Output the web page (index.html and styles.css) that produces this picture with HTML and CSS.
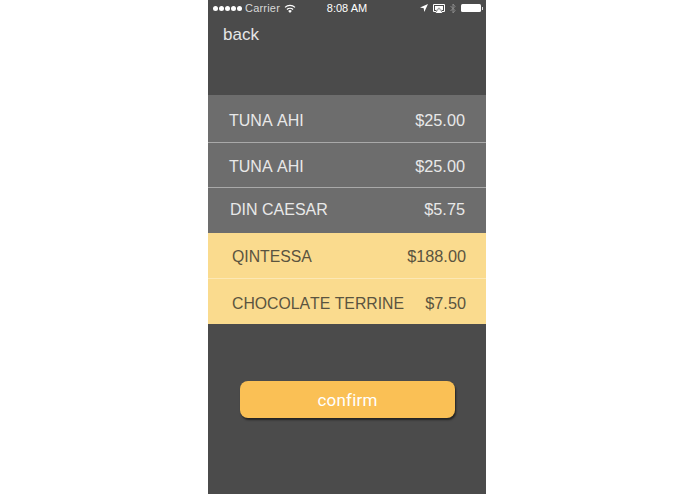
FILE: index.html
```html
<!DOCTYPE html>
<html lang="en">
<head>
<meta charset="utf-8">
<title>Order</title>
<link rel="stylesheet" href="styles.css">
</head>
<body>
<main class="phone">
  <div class="status">
    <div class="status-left">
      <span class="dots"><i></i><i></i><i></i><i></i><i></i></span>
      <span class="carrier">Carrier</span>
      <svg class="wifi" width="12" height="9" viewBox="0 0 12 9"><path d="M6 9 4.2 6.9a2.6 2.6 0 0 1 3.6 0Z" fill="#fff"/><path d="M2.9 5.5a4.5 4.5 0 0 1 6.2 0M1 3.4a7.3 7.3 0 0 1 10 0" fill="none" stroke="#fff" stroke-width="1.2"/></svg>
    </div>
    <div class="time">8:08 AM</div>
    <div class="status-right">
      <svg width="8" height="8" viewBox="0 0 8 8"><path d="M8 0 0 3.6l3.700.6.6 3.800Z" fill="#fff"/></svg>
      <svg width="12" height="9" viewBox="0 0 12 9"><path d="M.5.500h11v7H9L6 4.500 3 7.500H.5Z" fill="none" stroke="#fff"/><path d="M2 2h8v4H8.500L6 3.500 3.500 6H2Z" fill="#fff"/><path d="M6 5l3.500 4h-7Z" fill="#fff"/></svg>
      <svg width="6" height="11" viewBox="0 0 6 11"><path d="M.5 3 5 7.500 3 10V1l2 2.500L.5 8" fill="none" stroke="#8a8a8a"/></svg>
      <span class="battery"><b></b></span>
    </div>
  </div>
  <div class="back">back</div>
  <section class="list">
    <div class="row grey first"><span>TUNA AHI</span><span class="price">$25.00</span></div>
    <div class="row grey second"><span>TUNA AHI</span><span class="price">$25.00</span></div>
    <div class="row grey third"><span>DIN CAESAR</span><span class="price">$5.75</span></div>
    <div class="row yellow fourth"><span>QINTESSA</span><span class="price">$188.00</span></div>
    <div class="row yellow last"><span>CHOCOLATE TERRINE</span><span class="price">$7.50</span></div>
  </section>
  <button class="confirm" type="button">confirm</button>
</main>
</body>
</html>
```
FILE: styles.css
```css
* { box-sizing: border-box; }
html, body { margin: 0; height: 100%; background: #fff; }
body { display: flex; justify-content: center; overflow: hidden; padding-right: 1px; }
.phone {
  width: 278px;
  height: 494px;
  background: #4b4b4b;
  display: flex;
  flex-direction: column;
  font-family: "Liberation Sans", Arial, sans-serif;
  color: #fff;
}
.status {
  height: 16px;
  padding: 0 5px;
  display: flex;
  align-items: center;
  justify-content: space-between;
  font-size: 11px;
  position: relative;
}
.status-left, .status-right { display: flex; align-items: center; }
.status-left { gap: 3px; color: #d8d8d8; }
.carrier { letter-spacing: .2px; }
.wifi { margin-left: 1px; }
.status-right { gap: 5px; }
.dots { display: flex; gap: 1px; }
.dots i { width: 5px; height: 5px; border-radius: 50%; background: #fff; }
.time { position: absolute; left: 0; right: 0; text-align: center; pointer-events: none; }
.battery {
  width: 20px;
  height: 8px;
  background: #fff;
  border-radius: 1.500px;
  position: relative;
}
.battery b {
  position: absolute;
  right: -2px;
  top: 2.500px;
  width: 1.500px;
  height: 3px;
  background: #ddd;
}
.back {
  font-size: 17px;
  line-height: 20px;
  padding: 9px 0 0 15px;
  height: 79px;
  color: #e6e6e6;
}
.list { display: flex; flex-direction: column; }
.row {
  display: flex;
  justify-content: space-between;
  align-items: baseline;
  font-size: 16px;
  line-height: 20px;
  font-kerning: none;
  padding: 0 21px;
}
.price { font-size: 16.300px; }
.grey { background: #6d6d6d; color: #e8e8e8; border-bottom: 1px solid #a9a9a9; }
.first { height: 48px; padding-top: 15px; }
.second { height: 45px; padding-top: 13px; }
.third { height: 45px; border-bottom: 0; padding-left: 22px; padding-top: 11px; }
.yellow {
  background: #fadb8e;
  color: #5a5440;
  font-size: 15.800px;
  height: 46px;
  padding-left: 24px;
  padding-right: 20px;
  border-bottom: 1px solid #fce8b4;
}
.fourth { padding-top: 13px; }
.last { border-bottom: 0; height: 45px; padding-top: 14px; }
.confirm {
  margin: 57px 0 0 32px;
  width: 215px;
  height: 37px;
  border: 0;
  border-radius: 8px;
  background: #fac055;
  color: #fff;
  font: 400 17px Roboto, "Liberation Sans", sans-serif;
  letter-spacing: .2px;
  box-shadow: 1px 2px 2px rgba(0,0,0,.55);
}
```
